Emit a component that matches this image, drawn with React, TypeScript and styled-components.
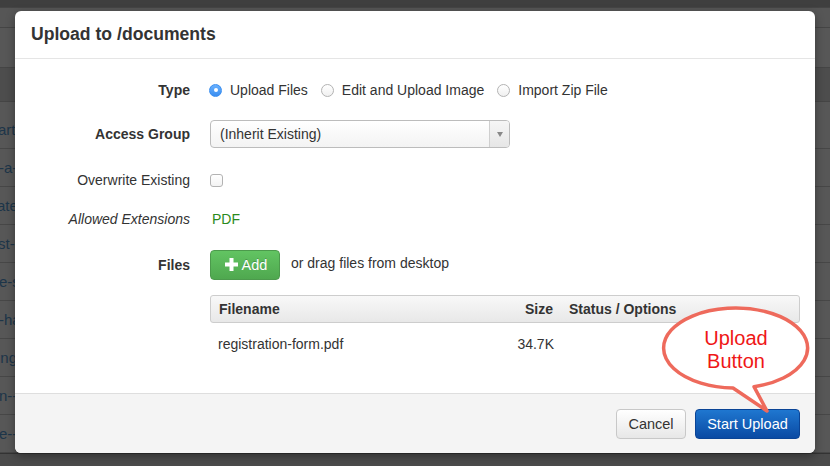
import styled, { createGlobalStyle } from "styled-components";

const GlobalStyle = createGlobalStyle`
  html, body {
    margin: 0;
    padding: 0;
  }
  body {
    width: 830px;
    height: 466px;
    overflow: hidden;
    background: #575757;
    font-family: "Liberation Sans", Arial, sans-serif;
    font-size: 14px;
    color: #333;
  }
`;

const Screen = styled.div`
  position: relative;
  width: 830px;
  height: 466px;
  overflow: hidden;
`;

/* the page behind the dim overlay */
const Behind = styled.div`
  display: flex;
  flex-direction: column;
  height: 100%;
  background: #575757;
`;

const Band = styled.div<{ $h: number; $bg: string }>`
  height: ${({ $h }) => $h}px;
  flex: none;
  background: ${({ $bg }) => $bg};
  border-bottom: 1px solid #454545;
  box-sizing: border-box;
`;

const BgRow = styled.div<{ $h?: number }>`
  height: ${({ $h }) => $h ?? 38}px;
  flex: none;
  display: flex;
  align-items: center;
  border-bottom: 1px solid #474747;
  box-sizing: border-box;
  color: #1d3549;
  font-size: 15px;
  padding-top: ${({ $h }) => ($h ? $h - 38 : 0)}px;
  white-space: nowrap;
`;

const BgText = styled.span<{ $shift: number }>`
  margin-left: ${({ $shift }) => $shift}px;
`;

const BottomBand = styled.div`
  flex: 1;
  background: #4b4b4b;
  border-top: 1px solid #333;
`;

const Overlay = styled.div`
  position: absolute;
  inset: 0;
  display: flex;
  justify-content: center;
  padding-top: 11px;
  box-sizing: border-box;
`;

const Modal = styled.div`
  width: 800px;
  height: 442px;
  display: flex;
  flex-direction: column;
  background: #fff;
  border-radius: 6px;
  box-shadow: 0 3px 10px rgba(0, 0, 0, 0.35);
  overflow: hidden;
`;

const Header = styled.div`
  height: 48px;
  flex: none;
  box-sizing: border-box;
  display: flex;
  align-items: center;
  padding: 0 16px;
  border-bottom: 1px solid #e5e5e5;
`;

const Title = styled.h3`
  margin: 0;
  font-size: 17.6px;
  font-weight: bold;
  color: #333;
`;

const Body = styled.div`
  flex: 1;
  padding: 9px 15px 0 15px;
  display: flex;
  flex-direction: column;
`;

const FormRow = styled.div<{ $h: number }>`
  height: ${({ $h }) => $h}px;
  display: grid;
  grid-template-columns: 160px 1fr;
  column-gap: 20px;
  align-items: center;
`;

const Label = styled.div<{ $kind?: "bold" | "italic" }>`
  text-align: right;
  font-weight: ${({ $kind }) => ($kind === "bold" ? "bold" : "normal")};
  font-style: ${({ $kind }) => ($kind === "italic" ? "italic" : "normal")};
  color: #333;
`;

const Controls = styled.div`
  display: flex;
  align-items: center;
`;

const RadioOption = styled.label`
  display: flex;
  align-items: center;
  gap: 8px;
  margin-right: 14px;
  color: #333;
`;

const Radio = styled.span<{ $checked?: boolean }>`
  width: 13px;
  height: 13px;
  border-radius: 50%;
  box-sizing: border-box;
  display: flex;
  align-items: center;
  justify-content: center;
  margin-left: -1px;
  border: 1px solid ${({ $checked }) => ($checked ? "#3a8ef0" : "#b3b3b3")};
  background: ${({ $checked }) =>
    $checked
      ? "linear-gradient(#69b1ff, #3a8ef0)"
      : "linear-gradient(#ffffff, #f0f0f0)"};
  &::after {
    content: "";
    display: ${({ $checked }) => ($checked ? "block" : "none")};
    width: 4px;
    height: 4px;
    border-radius: 50%;
    background: #fff;
  }
`;

const Select = styled.div`
  width: 300px;
  height: 28px;
  box-sizing: border-box;
  display: flex;
  border: 1px solid #bcbcbc;
  border-radius: 4px;
  background: linear-gradient(#ffffff, #f3f3f3);
  overflow: hidden;
`;

const SelectValue = styled.div`
  flex: 1;
  display: flex;
  align-items: center;
  padding-left: 9px;
  color: #333;
`;

const SelectArrow = styled.div`
  width: 19px;
  display: flex;
  align-items: center;
  justify-content: center;
  border-left: 1px solid #cfcfcf;
  background: linear-gradient(#f6f6f6, #e6e6e6);
  &::after {
    content: "";
    border-left: 3.5px solid transparent;
    border-right: 3.5px solid transparent;
    border-top: 5px solid #888;
  }
`;

const Checkbox = styled.span`
  width: 13px;
  height: 13px;
  box-sizing: border-box;
  border: 1px solid #b3b3b3;
  border-radius: 3px;
  background: linear-gradient(#ffffff, #f3f3f3);
`;

const Ext = styled.span`
  color: #2b8a1c;
  padding-left: 2px;
`;

const AddButton = styled.button`
  height: 30px;
  width: 70px;
  box-sizing: border-box;
  display: flex;
  align-items: center;
  justify-content: center;
  gap: 4px;
  padding: 0 0 0 2px;
  border: 1px solid #4c9a4c;
  border-radius: 4px;
  background: linear-gradient(#62c462, #4fa84f);
  color: #fff;
  font-family: inherit;
  font-size: 14.5px;
  text-shadow: 0 -1px 0 rgba(0, 0, 0, 0.2);
`;

const DragHint = styled.span`
  margin-left: 11px;
  margin-top: -3px;
  color: #333;
`;

const FileTable = styled.div`
  margin-left: 180px;
  width: 590px;
  display: flex;
  flex-direction: column;
`;

const TableRow = styled.div<{ $head?: boolean }>`
  height: ${({ $head }) => ($head ? 28 : 40)}px;
  box-sizing: border-box;
  display: grid;
  grid-template-columns: 1fr 80px 238px;
  align-items: center;
  font-weight: ${({ $head }) => ($head ? "bold" : "normal")};
  background: ${({ $head }) =>
    $head ? "linear-gradient(#f8f8f8, #e8e8e8)" : "transparent"};
  border: ${({ $head }) => ($head ? "1px solid #cdcdcd" : "none")};
  border-radius: 3px;
  padding-top: ${({ $head }) => ($head ? 0 : 1)}px;
`;

const Cell = styled.div<{ $align?: "left" | "right"; $pad?: number }>`
  text-align: ${({ $align }) => $align ?? "left"};
  padding: 0 8px 0 ${({ $pad }) => $pad ?? 8}px;
  white-space: nowrap;
`;

const Footer = styled.div`
  height: 60px;
  flex: none;
  box-sizing: border-box;
  border-top: 1px solid #dedede;
  background: #f4f4f4;
  display: flex;
  align-items: center;
  justify-content: flex-end;
  gap: 9px;
  padding: 0 15px 0 0;
`;

const FooterButton = styled.button<{ $primary?: boolean }>`
  height: 30px;
  box-sizing: border-box;
  padding: 0;
  border-radius: 4px;
  font-family: inherit;
  font-size: 14.5px;
  border: 1px solid ${({ $primary }) => ($primary ? "#0a4496" : "#c8c8c8")};
  color: ${({ $primary }) => ($primary ? "#fff" : "#333")};
  background: ${({ $primary }) =>
    $primary
      ? "linear-gradient(#1f77d0, #0a4aa3)"
      : "linear-gradient(#ffffff, #e7e7e7)"};
  width: ${({ $primary }) => ($primary ? 105 : 70)}px;
`;

/* speech bubble annotation over the dialog */
const Callout = styled.div`
  position: absolute;
  left: 655px;
  top: 300px;
  width: 160px;
  height: 120px;
`;

const CalloutText = styled.div`
  position: absolute;
  left: 0;
  width: 162px;
  top: 27px;
  text-align: center;
  color: #ef1717;
  font-size: 20px;
  line-height: 23px;
`;

const PlusIcon = () => (
  <svg width="13" height="13" viewBox="0 0 13 13">
    <rect x="4.5" y="0" width="4" height="13" fill="#fff" />
    <rect x="0" y="4.5" width="13" height="4" fill="#fff" />
  </svg>
);

const bgRows = [
  { t: "artr", s: -2 },
  { t: "-a", s: -1 },
  { t: "ate", s: -3 },
  { t: "st-", s: -2 },
  { t: "e-s", s: -1 },
  { t: "-ha", s: -1 },
  { t: "ing", s: -3 },
  { t: "n-", s: -1 },
  { t: "e-", s: -1 },
];

export default function App() {
  return (
    <>
      <GlobalStyle />
      <Screen>
        <Behind>
          <Band $h={8} $bg="#3f3f3f" />
          <Band $h={20} $bg="#565656" />
          <Band $h={40} $bg="#575757" />
          <Band $h={34} $bg="#4d4d4d" />
          {bgRows.map((r, i) => (
            <BgRow key={i} $h={i === 0 ? 47 : undefined}>
              <BgText $shift={r.s}>{r.t}-item</BgText>
            </BgRow>
          ))}
          <BottomBand />
        </Behind>

        <Overlay>
          <Modal>
            <Header>
              <Title>Upload to /documents</Title>
            </Header>
            <Body>
              <FormRow $h={44}>
                <Label $kind="bold">Type</Label>
                <Controls>
                  <RadioOption>
                    <Radio $checked /> Upload Files
                  </RadioOption>
                  <RadioOption>
                    <Radio /> Edit and Upload Image
                  </RadioOption>
                  <RadioOption>
                    <Radio /> Import Zip File
                  </RadioOption>
                </Controls>
              </FormRow>
              <FormRow $h={44}>
                <Label $kind="bold">Access Group</Label>
                <Controls>
                  <Select>
                    <SelectValue>(Inherit Existing)</SelectValue>
                    <SelectArrow />
                  </Select>
                </Controls>
              </FormRow>
              <FormRow $h={48}>
                <Label>Overwrite Existing</Label>
                <Controls>
                  <Checkbox />
                </Controls>
              </FormRow>
              <FormRow $h={30}>
                <Label $kind="italic">Allowed Extensions</Label>
                <Controls>
                  <Ext>PDF</Ext>
                </Controls>
              </FormRow>
              <FormRow $h={61}>
                <Label $kind="bold">Files</Label>
                <Controls>
                  <AddButton>
                    <PlusIcon /> Add
                  </AddButton>
                  <DragHint>or drag files from desktop</DragHint>
                </Controls>
              </FormRow>
              <FileTable>
                <TableRow $head>
                  <Cell $pad={8}>Filename</Cell>
                  <Cell $align="right">Size</Cell>
                  <Cell>Status / Options</Cell>
                </TableRow>
                <TableRow>
                  <Cell $pad={8}>registration-form.pdf</Cell>
                  <Cell $align="right">34.7K</Cell>
                  <Cell />
                </TableRow>
              </FileTable>
            </Body>
            <Footer>
              <FooterButton>Cancel</FooterButton>
              <FooterButton $primary>Start Upload</FooterButton>
            </Footer>
          </Modal>
        </Overlay>

        <Callout>
          <svg width="160" height="120" viewBox="655 300 160 120">
            <path
              d="M 733 388 A 72 40 0 1 1 754 386.7 L 767 411 Z"
              fill="#fff"
              stroke="#ee6a5c"
              strokeWidth="3.5"
              strokeLinejoin="round"
            />
          </svg>
          <CalloutText>
            Upload
            <br />
            Button
          </CalloutText>
        </Callout>
      </Screen>
    </>
  );
}
